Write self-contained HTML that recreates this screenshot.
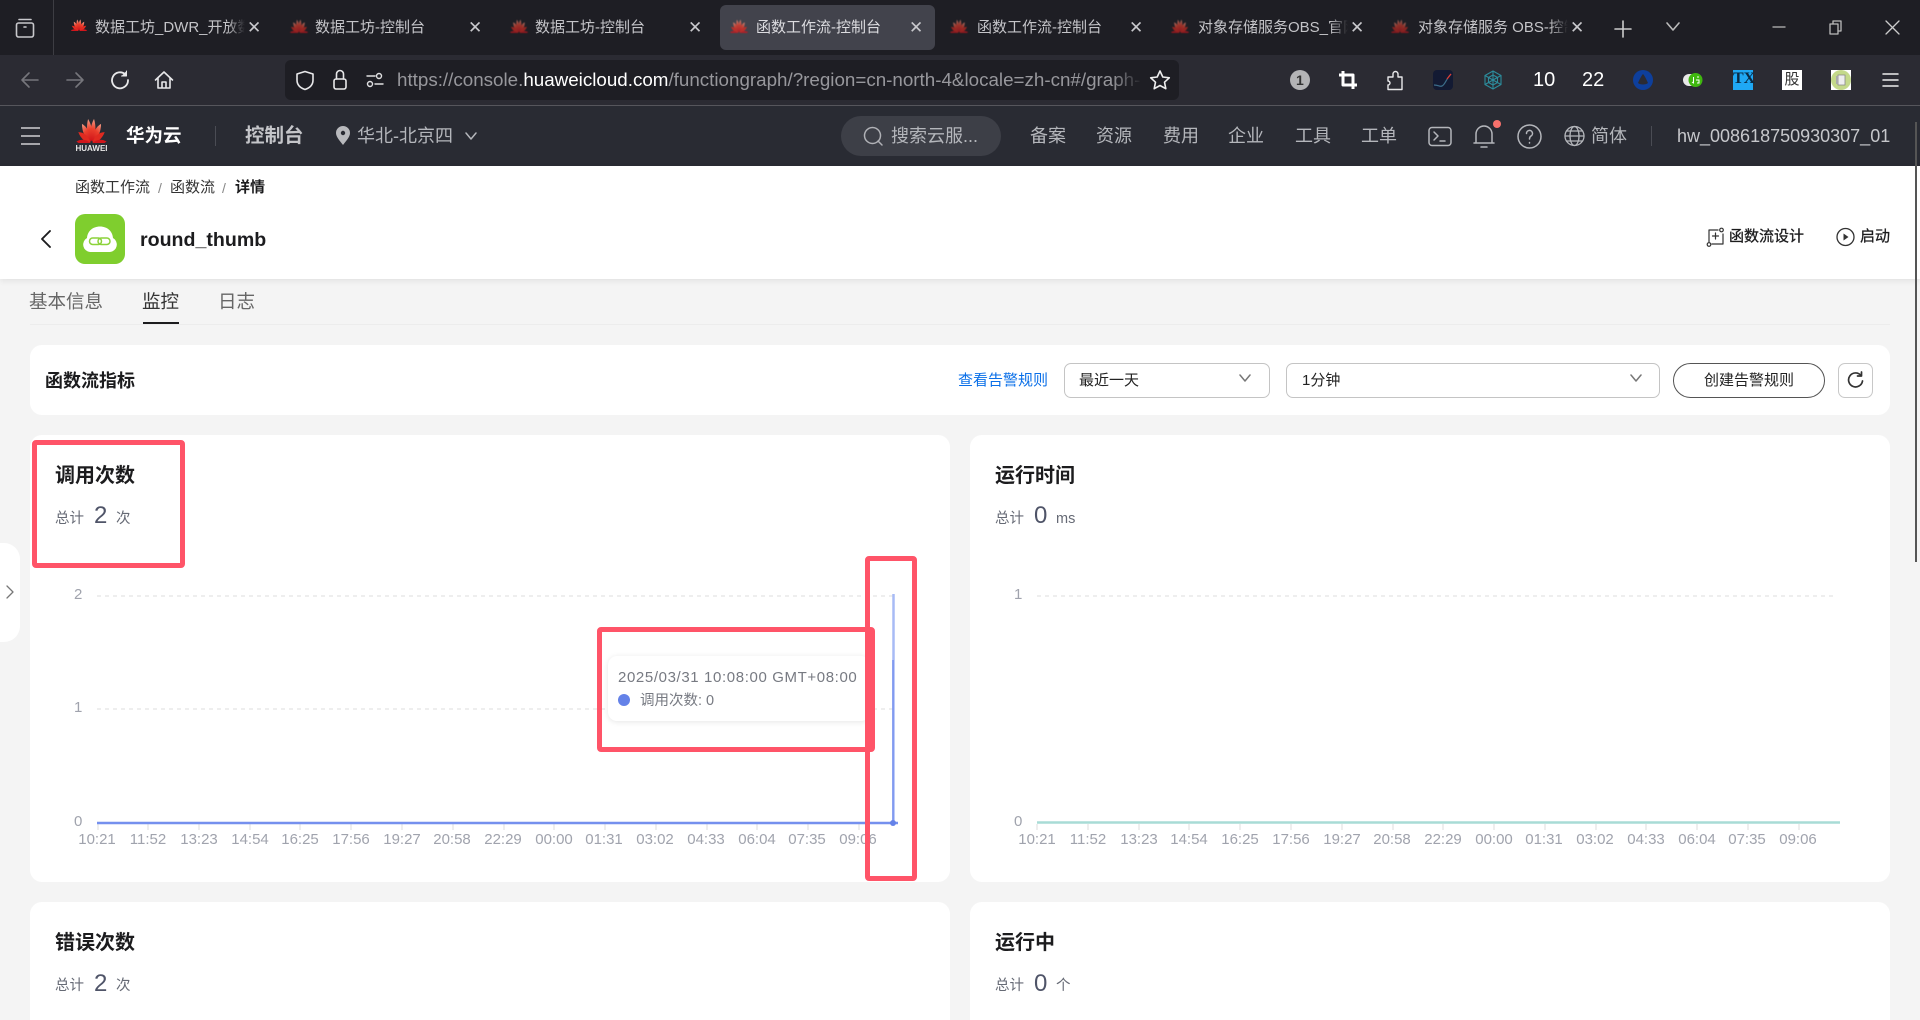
<!DOCTYPE html>
<html lang="zh-CN">
<head>
<meta charset="utf-8">
<title>函数工作流-控制台</title>
<style>
html,body{margin:0;padding:0;width:1920px;height:1020px;overflow:hidden;background:#f4f4f4;font-family:"Liberation Sans","Noto Sans CJK SC",sans-serif}
#root{position:absolute;left:0;top:0;width:1920px;height:1020px;overflow:hidden}
div,span,svg{position:absolute;box-sizing:border-box}
.t{white-space:nowrap;line-height:20px}
.tab{color:#c4c4c8;font-size:15px;top:18px;overflow:hidden;width:150px}
.clip{-webkit-mask-image:linear-gradient(90deg,#000 88%,transparent);mask-image:linear-gradient(90deg,#000 88%,transparent)}
.x{color:#c8c8cc;font-size:17px;top:18px}
.nav{color:#b4b6bb;font-size:18px;top:126px}
.card{background:#fff;border-radius:12px}
.h{font-size:20px;font-weight:700;color:#1c1c1e}
.sm{font-size:14.500px;color:#666a75}
.big{font-size:24px;color:#4f5468}
.al{font-size:15px;color:#a0a3ad;transform:translateX(-50%)}
.yl{font-size:15px;color:#a0a3ad}
.red{border:5px solid #ff5468;border-radius:4px}
.ic{fill:none;stroke-linecap:round;stroke-linejoin:round}
.fav{top:19px;filter:blur(.5px);opacity:.62}
</style>
</head>
<body>
<div id="root">
<svg width="0" height="0" style="left:0;top:0">
<defs>
<linearGradient id="g" x1="0" y1="0" x2="0" y2="1"><stop offset="0" stop-color="#f2a08a"/><stop offset=".45" stop-color="#ea3f2c"/><stop offset="1" stop-color="#cf1219"/></linearGradient>
<symbol id="petals" viewBox="-36 -36 72 38" preserveAspectRatio="none">
<g fill="url(#g)">
<path d="M0 0C-7-10-8-22-1-35C7-22 6-10 0 0Z" transform="translate(-1 0) rotate(-9)"/>
<path d="M0 0C-7-10-8-22-1-35C7-22 6-10 0 0Z" transform="translate(1 0) rotate(9)"/>
<path d="M0 0C-7-10-8-22-1-33C7-22 6-10 0 0Z" transform="translate(-2 0) rotate(-33)"/>
<path d="M0 0C-7-10-8-22-1-33C7-22 6-10 0 0Z" transform="translate(2 0) rotate(33) scale(-1 1)"/>
<path d="M0 0C-6-9-7-20-1-31C6-20 5-9 0 0Z" transform="translate(-2 1) rotate(-58)" fill="#e02a20"/>
<path d="M0 0C-6-9-7-20-1-31C6-20 5-9 0 0Z" transform="translate(2 1) rotate(58) scale(-1 1)" fill="#e02a20"/>
<path d="M0 0C-5-9-6-20-1-31C5-20 4-9 0 0Z" transform="translate(-2 2) rotate(-84)" fill="#d0161c"/>
<path d="M0 0C-5-9-6-20-1-31C5-20 4-9 0 0Z" transform="translate(2 2) rotate(84) scale(-1 1)" fill="#d0161c"/>
</g>
</symbol>
</defs>
</svg>

<!-- tab strip -->
<div style="left:0;top:0;width:1920px;height:55px;background:#1e1e24"></div>
<svg class="ic" style="left:13px;top:16px" width="24" height="24" viewBox="0 0 24 24" stroke="#c8c8cc" stroke-width="1.6"><rect x="3.5" y="7" width="17" height="14" rx="2"/><path d="M6 3.5h12M11 11h2"/></svg>
<div style="left:53px;top:0;width:1px;height:55px;background:#3d3d43"></div>
<div style="left:720px;top:5px;width:215px;height:45px;background:#42434c;border-radius:6px"></div>

<svg style="left:70px;top:19px" width="18" height="12"><use href="#petals" width="18" height="12"/></svg>
<svg class="fav" style="left:289px" width="20" height="14"><use href="#petals" width="20" height="14"/></svg>
<svg class="fav" style="left:509px" width="20" height="14"><use href="#petals" width="20" height="14"/></svg>
<svg class="fav" style="left:729px;opacity:.75" width="20" height="14"><use href="#petals" width="20" height="14"/></svg>
<svg class="fav" style="left:949px" width="20" height="14"><use href="#petals" width="20" height="14"/></svg>
<svg class="fav" style="left:1170px" width="20" height="14"><use href="#petals" width="20" height="14"/></svg>
<svg class="fav" style="left:1390px;opacity:.55" width="20" height="14"><use href="#petals" width="20" height="14"/></svg>

<span class="t tab clip" style="left:95px">数据工坊_DWR_开放数据工坊</span><span class="t x" style="left:247px">✕</span>
<span class="t tab" style="left:315px">数据工坊-控制台</span><span class="t x" style="left:468px">✕</span>
<span class="t tab" style="left:535px">数据工坊-控制台</span><span class="t x" style="left:688px">✕</span>
<span class="t tab" style="left:756px;color:#dcdce0">函数工作流-控制台</span><span class="t x" style="left:909px">✕</span>
<span class="t tab" style="left:977px">函数工作流-控制台</span><span class="t x" style="left:1129px">✕</span>
<span class="t tab clip" style="left:1198px">对象存储服务OBS_官网_华为云</span><span class="t x" style="left:1350px">✕</span>
<span class="t tab clip" style="left:1418px">对象存储服务 OBS-控制台</span><span class="t x" style="left:1570px">✕</span>

<svg class="ic" style="left:1612px;top:18px" width="22" height="22" viewBox="0 0 22 22" stroke="#ccc" stroke-width="1.6"><path d="M11 3v16M3 11h16"/></svg>
<svg class="ic" style="left:1665px;top:21px" width="16" height="12" viewBox="0 0 16 12" stroke="#bbb" stroke-width="1.6"><path d="M2 2l6 7 6-7"/></svg>
<svg class="ic" style="left:1772px;top:22px" width="14" height="10" stroke="#bbb" stroke-width="1.3"><path d="M1 5h12"/></svg>
<svg class="ic" style="left:1828px;top:20px" width="15" height="15" viewBox="0 0 15 15" stroke="#bbb" stroke-width="1.3"><rect x="2" y="4" width="8" height="10"/><path d="M5 4V1h8v10h-3"/></svg>
<svg class="ic" style="left:1885px;top:20px" width="15" height="15" viewBox="0 0 15 15" stroke="#ccc" stroke-width="1.3"><path d="M1 1l13 13M14 1L1 14"/></svg>

<!-- address bar -->
<div style="left:0;top:55px;width:1920px;height:50px;background:#2b2b33"></div>
<div style="left:0;top:105px;width:1920px;height:1px;background:#56565c"></div>
<svg class="ic" style="left:20px;top:70px" width="20" height="20" viewBox="0 0 20 20" stroke="#76767c" stroke-width="1.6"><path d="M18 10H2M9 3l-7 7 7 7"/></svg>
<svg class="ic" style="left:65px;top:70px" width="20" height="20" viewBox="0 0 20 20" stroke="#76767c" stroke-width="1.6"><path d="M2 10h16M11 3l7 7-7 7"/></svg>
<svg class="ic" style="left:110px;top:70px" width="20" height="20" viewBox="0 0 20 20" stroke="#e8e8ea" stroke-width="1.8"><path d="M15.5 4.5A8 8 0 1 0 18 10"/><path d="M16.5 1v5h-5" fill="#e8e8ea" stroke-width="1"/></svg>
<svg class="ic" style="left:154px;top:70px" width="20" height="20" viewBox="0 0 20 20" stroke="#e8e8ea" stroke-width="1.6"><path d="M1.5 10L10 2l8.5 8M4 8v10h12V8M8 18v-6h4v6"/></svg>
<div style="left:285px;top:60px;width:894px;height:40px;background:#1e1e24;border-radius:6px"></div>
<svg class="ic" style="left:295px;top:70px" width="20" height="21" viewBox="0 0 20 21" stroke="#e8e8ea" stroke-width="1.6"><path d="M10 1.5l8 2.5v6c0 5-3.500 8-8 9.500-4.500-1.500-8-4.500-8-9.500V4z"/></svg>
<svg class="ic" style="left:331px;top:69px" width="18" height="22" viewBox="0 0 18 22" stroke="#e8e8ea" stroke-width="1.6"><rect x="3" y="10" width="12" height="10" rx="2"/><path d="M5.500 10V5a3.500 3.500 0 0 1 7 0v5"/></svg>
<svg class="ic" style="left:365px;top:71px" width="20" height="18" viewBox="0 0 20 18" stroke="#e0e0e2" stroke-width="1.4"><circle cx="14" cy="5" r="2.500"/><path d="M2 5h8M10 13h8"/><circle cx="5" cy="13" r="2.500"/></svg>
<span class="t" style="left:397px;top:70px;width:745px;overflow:hidden;font-size:18.800px;color:#97979c;-webkit-mask-image:linear-gradient(90deg,#000 96%,transparent);mask-image:linear-gradient(90deg,#000 96%,transparent)">https://console.<span style="position:static;color:#fff">huaweicloud.com</span>/functiongraph/?region=cn-north-4&amp;locale=zh-cn#/graph-detail</span>
<svg class="ic" style="left:1149px;top:69px" width="22" height="22" viewBox="0 0 22 22" stroke="#eee" stroke-width="1.6"><path d="M11 2l2.800 6 6.500.8-4.800 4.400 1.300 6.500L11 16.500l-5.800 3.200 1.300-6.500L1.700 8.800 8.200 8z"/></svg>

<div style="left:1290px;top:70px;width:20px;height:20px;border-radius:50%;background:#b4b4b6"></div>
<span class="t" style="left:1296px;top:70px;font-size:14px;font-weight:700;color:#333">1</span>
<svg class="ic" style="left:1338px;top:70px" width="20" height="20" viewBox="0 0 20 20" stroke="#fff" stroke-width="3"><path d="M5 1v14h14M1 5h14v14" stroke-linecap="butt"/></svg>
<svg class="ic" style="left:1386px;top:69px" width="18" height="22" viewBox="0 0 18 22" stroke="#e8e8ea" stroke-width="1.400"><path d="M2 20.500h14V8h-4V5a2.500 2.500 0 0 0-5 0v3H2v4a2 2 0 0 1 0 4z"/></svg>
<svg style="left:1433px;top:70px" width="20" height="20" viewBox="0 0 20 20"><rect width="20" height="20" rx="4" fill="#131a33"/><path d="M1 15c5 0 5 2 8 1s4-7 9-12" fill="none" stroke="#3c6d8a" stroke-width="1.200"/><path d="M14 9l4-5" fill="none" stroke="#e23a30" stroke-width="1.200"/></svg>
<svg class="ic" style="left:1483px;top:70px" width="20" height="20" viewBox="0 0 20 20" stroke="#2c8c9c" stroke-width="1.100"><path d="M10 1l8 4.500v9L10 19l-8-4.500v-9z"/><path d="M10 5l4.500 2.500v5L10 15l-4.500-2.500v-5zM10 1v18M2 5.500l16 9M18 5.500l-16 9"/></svg>
<span class="t" style="left:1533px;top:70px;font-size:20px;color:#fff">10</span>
<span class="t" style="left:1582px;top:70px;font-size:20px;color:#fff">22</span>
<svg style="left:1633px;top:70px" width="20" height="20" viewBox="0 0 20 20"><circle cx="10" cy="10" r="10" fill="#0e3f9c"/><path d="M10 4c2 2 4 7 5 9-2 2-8 2-10 0 1-2 3-7 5-9z" fill="#2b2b33"/></svg>
<svg style="left:1683px;top:71px" width="20" height="18" viewBox="0 0 20 18"><rect x="0" y="3" width="16" height="12" rx="6" fill="#e8e8e8"/><circle cx="12.500" cy="9" r="7" fill="#3fb80f"/><path d="M9 11l1.500 1V6M14 6h2M13 9h3v3h-2" fill="none" stroke="#fff" stroke-width="1"/></svg>
<div style="left:1733px;top:70px;width:20px;height:20px;background:#1fa8f4;overflow:hidden"></div>
<span class="t" style="left:1733px;top:69px;width:20px;text-align:center;font:700 16px/20px 'Liberation Serif',serif;color:#0a2a44">TX</span>
<div style="left:1782px;top:70px;width:20px;height:20px;background:#fff"></div>
<span class="t" style="left:1782px;top:70px;width:20px;text-align:center;font-size:15px;color:#333">股</span>
<div style="left:1831px;top:70px;width:20px;height:20px;background:#fff"></div>
<svg style="left:1831px;top:70px" width="20" height="20" viewBox="0 0 20 20"><circle cx="10" cy="10" r="10" fill="#c4d98a"/><path d="M7 5h7v10H7z" fill="#eee" stroke="#888" stroke-width=".8"/><path d="M5 6h2v8H5z" fill="#aaa"/></svg>
<svg class="ic" style="left:1882px;top:72px" width="17" height="16" viewBox="0 0 17 16" stroke="#eee" stroke-width="1.500"><path d="M1 2h15M1 8h15M1 14h15"/></svg>

<!-- console header -->
<div style="left:0;top:106px;width:1920px;height:60px;background:#292b33"></div>
<svg class="ic" style="left:20px;top:126px" width="21" height="20" viewBox="0 0 21 20" stroke="#cfd0d3" stroke-width="1.600"><path d="M1 2h19M1 10h19M1 18h19" stroke-linecap="butt"/></svg>
<svg style="left:75px;top:118px" width="33" height="25"><use href="#petals" width="33" height="25"/></svg>
<span class="t" style="left:74px;top:143px;width:35px;text-align:center;font-size:8px;font-weight:700;color:#e8e8e8;line-height:12px">HUAWEI</span>
<span class="t" style="left:126px;top:126px;font-size:18.500px;font-weight:700;color:#fff">华为云</span>
<div style="left:215px;top:126px;width:1px;height:20px;background:#4a4c54"></div>
<span class="t" style="left:245px;top:126px;font-size:19.500px;font-weight:700;color:#c4c5c9">控制台</span>
<svg style="left:336px;top:126px" width="14" height="19" viewBox="0 0 14 19"><path d="M7 0a7 7 0 0 1 7 7c0 4-4 8-7 12C4 15 0 11 0 7a7 7 0 0 1 7-7z" fill="#b8b9bd"/><circle cx="7" cy="7" r="2.200" fill="#292b33"/></svg>
<span class="t nav" style="left:357px">华北-北京四</span>
<svg class="ic" style="left:464px;top:131px" width="14" height="10" viewBox="0 0 14 10" stroke="#b4b6bb" stroke-width="1.500"><path d="M2 2l5 6 5-6"/></svg>
<div style="left:841px;top:116px;width:160px;height:40px;border-radius:20px;background:#3d3f47"></div>
<svg class="ic" style="left:863px;top:126px" width="21" height="21" viewBox="0 0 21 21" stroke="#b0b1b6" stroke-width="1.500"><circle cx="9.500" cy="9.500" r="8"/><path d="M15 15l4 4"/></svg>
<span class="t nav" style="left:891px">搜索云服...</span>
<span class="t nav" style="left:1030px">备案</span>
<span class="t nav" style="left:1096px">资源</span>
<span class="t nav" style="left:1163px">费用</span>
<span class="t nav" style="left:1228px">企业</span>
<span class="t nav" style="left:1295px">工具</span>
<span class="t nav" style="left:1361px">工单</span>
<svg class="ic" style="left:1428px;top:126px" width="24" height="21" viewBox="0 0 24 21" stroke="#b4b6bb" stroke-width="1.500"><rect x="1" y="1.500" width="22" height="18" rx="3"/><path d="M6 6l4 4-4 4M12 15h5"/></svg>
<svg class="ic" style="left:1473px;top:124px" width="22" height="25" viewBox="0 0 22 25" stroke="#b4b6bb" stroke-width="1.500"><path d="M3 19V10a8 8 0 0 1 16 0v9zM1 19h20M8 23h6"/></svg>
<div style="left:1493px;top:120px;width:8px;height:8px;border-radius:50%;background:#f7716c"></div>
<svg class="ic" style="left:1517px;top:124px" width="25" height="25" viewBox="0 0 25 25" stroke="#b4b6bb" stroke-width="1.500"><circle cx="12.500" cy="12.500" r="11.500"/><path d="M9.500 9.500a3 3 0 1 1 4.500 2.500c-1.200.8-1.500 1.500-1.500 3M12.500 18.500v.5"/></svg>
<svg class="ic" style="left:1564px;top:125px" width="21" height="22" viewBox="0 0 21 22" stroke="#b4b6bb" stroke-width="1.300"><circle cx="10.500" cy="11" r="9.500"/><ellipse cx="10.500" cy="11" rx="4.500" ry="9.500"/><path d="M1 11h19M2.500 6h16M2.500 16h16"/></svg>
<span class="t nav" style="left:1591px">简体</span>
<div style="left:1651px;top:126px;width:1px;height:20px;background:#4a4c54"></div>
<span class="t" style="left:1677px;top:126px;font-size:18px;color:#c6c7cb">hw_008618750930307_01</span>

<!-- page header -->
<div style="left:0;top:166px;width:1920px;height:113px;background:#fff;box-shadow:0 2px 6px rgba(0,0,0,.08)"></div>
<span class="t" style="left:75px;top:178px;font-size:15px;color:#333">函数工作流</span>
<span class="t" style="left:158px;top:178px;font-size:14px;color:#888">/</span>
<span class="t" style="left:170px;top:178px;font-size:15px;color:#333">函数流</span>
<span class="t" style="left:222px;top:178px;font-size:14px;color:#888">/</span>
<span class="t" style="left:235px;top:178px;font-size:15px;font-weight:700;color:#1c1c1e">详情</span>
<svg class="ic" style="left:39px;top:229px" width="14" height="20" viewBox="0 0 14 20" stroke="#1c1c1e" stroke-width="1.900"><path d="M11 2l-8 8 8 8"/></svg>
<svg style="left:75px;top:214px" width="50" height="50" viewBox="0 0 50 50"><rect width="50" height="50" rx="10" fill="#7fce2e"/><path d="M15 38a7.500 7.500 0 0 1-3-14c.500-7 6-11.500 13-11.500s12.500 4.500 13 11.500a7.500 7.500 0 0 1-3 14z" fill="#fff"/><rect x="14.500" y="24" width="12" height="6.500" rx="3.200" fill="none" stroke="#8cd23a" stroke-width="1.500"/><rect x="23" y="24" width="12" height="6.500" rx="3.200" fill="none" stroke="#8cd23a" stroke-width="1.500"/></svg>
<span class="t" style="left:140px;top:230px;font-size:19.600px;font-weight:700;color:#1c1c1e">round_thumb</span>
<svg class="ic" style="left:1706px;top:227px" width="19" height="20" viewBox="0 0 19 20" stroke="#333" stroke-width="1.200"><path d="M12 3H3v12M17 7v10H6M9.500 6v6M6.500 9h6"/><circle cx="15.500" cy="3" r="1.800"/><circle cx="3" cy="17.500" r="1.800"/></svg>
<span class="t" style="left:1729px;top:227px;font-size:15px;color:#1c1c1e;-webkit-text-stroke:.3px #1c1c1e">函数流设计</span>
<svg class="ic" style="left:1836px;top:227px" width="19" height="20" viewBox="0 0 19 20"><circle cx="9.500" cy="10" r="8.500" stroke="#333" stroke-width="1.300"/><path d="M7.500 6.500l5 3.500-5 3.500z" fill="#333"/></svg>
<span class="t" style="left:1860px;top:227px;font-size:15px;color:#1c1c1e;-webkit-text-stroke:.3px #1c1c1e">启动</span>

<div style="left:1915px;top:122px;width:2px;height:440px;background:#555"></div>

<!-- tabs -->
<span class="t" style="left:29px;top:292px;font-size:18.500px;color:#666">基本信息</span>
<span class="t" style="left:142px;top:292px;font-size:18.500px;color:#333">监控</span>
<span class="t" style="left:218px;top:292px;font-size:18.500px;color:#666">日志</span>
<div style="left:30px;top:324px;width:1860px;height:1px;background:#ececec"></div>
<div style="left:143px;top:322px;width:36px;height:2px;background:#1c1c1e"></div>

<!-- toolbar card -->
<div class="card" style="left:30px;top:345px;width:1860px;height:70px"></div>
<span class="t" style="left:45px;top:371px;font-size:18px;font-weight:700;color:#1c1c1e">函数流指标</span>
<span class="t" style="left:958px;top:371px;font-size:15px;color:#0a6fe8">查看告警规则</span>
<div style="left:1064px;top:363px;width:206px;height:35px;border:1px solid #c4c4c4;border-radius:7px;background:#fff"></div>
<span class="t" style="left:1079px;top:371px;font-size:15px;color:#222">最近一天</span>
<svg class="ic" style="left:1238px;top:373px" width="14" height="11" viewBox="0 0 14 11" stroke="#777" stroke-width="1.500"><path d="M2 2l5 6 5-6"/></svg>
<div style="left:1286px;top:363px;width:374px;height:35px;border:1px solid #c4c4c4;border-radius:7px;background:#fff"></div>
<span class="t" style="left:1302px;top:371px;font-size:15px;color:#222">1分钟</span>
<svg class="ic" style="left:1629px;top:373px" width="14" height="11" viewBox="0 0 14 11" stroke="#777" stroke-width="1.500"><path d="M2 2l5 6 5-6"/></svg>
<div style="left:1673px;top:363px;width:152px;height:35px;border:1px solid #555;border-radius:18px;background:#fff"></div>
<span class="t" style="left:1673px;top:371px;width:152px;text-align:center;font-size:15px;color:#222">创建告警规则</span>
<div style="left:1838px;top:363px;width:35px;height:35px;border:1px solid #c8c8c8;border-radius:7px;background:#fff"></div>
<svg class="ic" style="left:1846px;top:371px" width="19" height="19" viewBox="0 0 19 19" stroke="#333" stroke-width="1.700"><path d="M15 4.500A7 7 0 1 0 16.500 10"/><path d="M15.500 1v4h-4"/></svg>

<!-- side handle -->
<div style="left:0;top:543px;width:20px;height:99px;background:#fff;border-radius:0 16px 16px 0"></div>
<svg class="ic" style="left:5px;top:584px" width="10" height="16" viewBox="0 0 10 16" stroke="#777" stroke-width="1.300"><path d="M2 2l6 6-6 6"/></svg>

<!-- chart cards -->
<div class="card" style="left:30px;top:435px;width:920px;height:447px"></div>
<div class="card" style="left:970px;top:435px;width:920px;height:447px"></div>
<div style="left:30px;top:902px;width:920px;height:118px;background:#fff;border-radius:12px 12px 0 0"></div>
<div style="left:970px;top:902px;width:920px;height:118px;background:#fff;border-radius:12px 12px 0 0"></div>

<span class="t h" style="left:55px;top:466px">调用次数</span>
<span class="t sm" style="left:55px;top:509px">总计</span>
<span class="t big" style="left:94px;top:506px">2</span>
<span class="t sm" style="left:116px;top:509px">次</span>

<span class="t h" style="left:995px;top:466px">运行时间</span>
<span class="t sm" style="left:995px;top:509px">总计</span>
<span class="t big" style="left:1034px;top:506px">0</span>
<span class="t sm" style="left:1056px;top:509px">ms</span>

<span class="t h" style="left:55px;top:933px">错误次数</span>
<span class="t sm" style="left:55px;top:976px">总计</span>
<span class="t big" style="left:94px;top:974px">2</span>
<span class="t sm" style="left:116px;top:976px">次</span>

<span class="t h" style="left:995px;top:933px">运行中</span>
<span class="t sm" style="left:995px;top:976px">总计</span>
<span class="t big" style="left:1034px;top:974px">0</span>
<span class="t sm" style="left:1056px;top:976px">个</span>

<!-- charts -->
<svg style="left:0;top:0" width="1920" height="1020" viewBox="0 0 1920 1020" fill="none">
<path d="M97 596H895M97 709H895" stroke="#dcdcdc" stroke-dasharray="4 4"/>
<path d="M1037 596H1837" stroke="#dcdcdc" stroke-dasharray="4 4"/>
<path d="M98 824v6M148 824v6M199 824v6M250 824v6M300 824v6M351 824v6M402 824v6M453 824v6M504 824v6M554 824v6M605 824v6M656 824v6M707 824v6M757 824v6M808 824v6M859 824v6" stroke="#dedede"/>
<path d="M1037 824v6M1088 824v6M1139 824v6M1189 824v6M1240 824v6M1291 824v6M1342 824v6M1393 824v6M1443 824v6M1494 824v6M1545 824v6M1596 824v6M1646 824v6M1697 824v6M1748 824v6M1799 824v6" stroke="#dedede"/>
<path d="M97 823H898" stroke="#7590ee" stroke-width="2.500"/>
<path d="M893.500 823V594" stroke="#a8bbf5" stroke-width="2.500"/>
<path d="M893 823V660" stroke="#7590ee" stroke-width="1.500"/>
<circle cx="893" cy="823" r="3" fill="#6482e8"/>
<path d="M1037 822.500H1840" stroke="#a8dcd6" stroke-width="2.500"/>
</svg>
<span class="t yl" style="left:74px;top:585px">2</span>
<span class="t yl" style="left:74px;top:698px">1</span>
<span class="t yl" style="left:74px;top:812px">0</span>
<span class="t yl" style="left:1014px;top:585px">1</span>
<span class="t yl" style="left:1014px;top:812px">0</span>

<span class="t al" style="left:97px;top:830px">10:21</span><span class="t al" style="left:148px;top:830px">11:52</span><span class="t al" style="left:199px;top:830px">13:23</span><span class="t al" style="left:250px;top:830px">14:54</span><span class="t al" style="left:300px;top:830px">16:25</span><span class="t al" style="left:351px;top:830px">17:56</span><span class="t al" style="left:402px;top:830px">19:27</span><span class="t al" style="left:452px;top:830px">20:58</span><span class="t al" style="left:503px;top:830px">22:29</span><span class="t al" style="left:554px;top:830px">00:00</span><span class="t al" style="left:604px;top:830px">01:31</span><span class="t al" style="left:655px;top:830px">03:02</span><span class="t al" style="left:706px;top:830px">04:33</span><span class="t al" style="left:757px;top:830px">06:04</span><span class="t al" style="left:807px;top:830px">07:35</span><span class="t al" style="left:858px;top:830px">09:06</span>

<span class="t al" style="left:1037px;top:830px">10:21</span><span class="t al" style="left:1088px;top:830px">11:52</span><span class="t al" style="left:1139px;top:830px">13:23</span><span class="t al" style="left:1189px;top:830px">14:54</span><span class="t al" style="left:1240px;top:830px">16:25</span><span class="t al" style="left:1291px;top:830px">17:56</span><span class="t al" style="left:1342px;top:830px">19:27</span><span class="t al" style="left:1392px;top:830px">20:58</span><span class="t al" style="left:1443px;top:830px">22:29</span><span class="t al" style="left:1494px;top:830px">00:00</span><span class="t al" style="left:1544px;top:830px">01:31</span><span class="t al" style="left:1595px;top:830px">03:02</span><span class="t al" style="left:1646px;top:830px">04:33</span><span class="t al" style="left:1697px;top:830px">06:04</span><span class="t al" style="left:1747px;top:830px">07:35</span><span class="t al" style="left:1798px;top:830px">09:06</span>

<!-- tooltip -->
<div style="left:608px;top:656px;width:262px;height:65px;background:#fff;border-radius:9px;box-shadow:0 1px 6px rgba(0,0,0,.1)"></div>
<span class="t" style="left:618px;top:668px;font-size:15px;letter-spacing:.62px;color:#777a82">2025/03/31 10:08:00 GMT+08:00</span>
<div style="left:618px;top:694px;width:12px;height:12px;border-radius:50%;background:#6482e8"></div>
<span class="t" style="left:640px;top:691px;font-size:14.500px;color:#777a82">调用次数: 0</span>

<!-- red annotations -->
<div class="red" style="left:32px;top:440px;width:153px;height:128px"></div>
<div class="red" style="left:597px;top:627px;width:278px;height:125px"></div>
<div class="red" style="left:865px;top:556px;width:52px;height:325px"></div>
</div>
</body>
</html>
